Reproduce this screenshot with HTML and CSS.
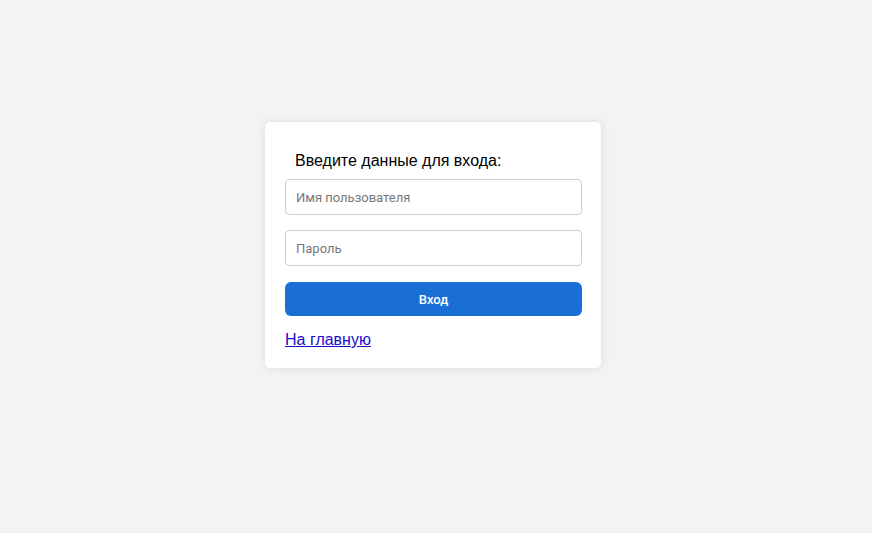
FILE: index.html
```html
<!DOCTYPE html>
<html lang="ru">
<head>
<meta charset="utf-8">
<title>Вход</title>
<link rel="stylesheet" href="styles.css">
</head>
<body>
<main class="page">
  <form class="card">
    <h2 class="title">Введите данные для входа:</h2>
    <input class="field" type="text" placeholder="Имя пользователя">
    <input class="field" type="password" placeholder="Пароль">
    <button class="btn" type="button">Вход</button>
    <a class="home" href="#">На главную</a>
  </form>
</main>
</body>
</html>
```
FILE: styles.css
```css
html, body {
  margin: 0;
  padding: 0;
  background: #f3f3f3;
  height: 100%;
}
.page {
  display: flex;
  justify-content: center;
  padding: 122px 6px 0 0;
}
.card {
  width: 297px;
  padding: 20px 19px 18px 20px;
  background: #fff;
  border-radius: 5px;
  box-shadow: 0 0 8px rgba(0,0,0,0.1);
  display: flex;
  flex-direction: column;
}
.title {
  margin: 9px 0 8px 10px;
  font-family: "Liberation Sans", Arial, sans-serif;
  font-weight: normal;
  font-size: 16px;
  line-height: 20px;
  color: #000;
}
.field {
  height: 36px;
  box-sizing: border-box;
  border: 1px solid #cfcfcf;
  border-radius: 4px;
  padding: 0 10px;
  font-family: Roboto, sans-serif;
  font-size: 13px;
  margin-bottom: 15px;
  outline: none;
}
.field::placeholder {
  color: #777;
}
.btn {
  height: 34px;
  border: none;
  border-radius: 6px;
  background: #1a6fd7;
  color: #fff;
  font-family: Roboto, sans-serif;
  font-weight: 500;
  font-size: 13px;
  margin-top: 1px;
  margin-bottom: 14px;
}
.home {
  align-self: flex-start;
  font-family: "Liberation Sans", Arial, sans-serif;
  font-size: 16px;
  line-height: 20px;
  color: #1a0dcc;
}
```
